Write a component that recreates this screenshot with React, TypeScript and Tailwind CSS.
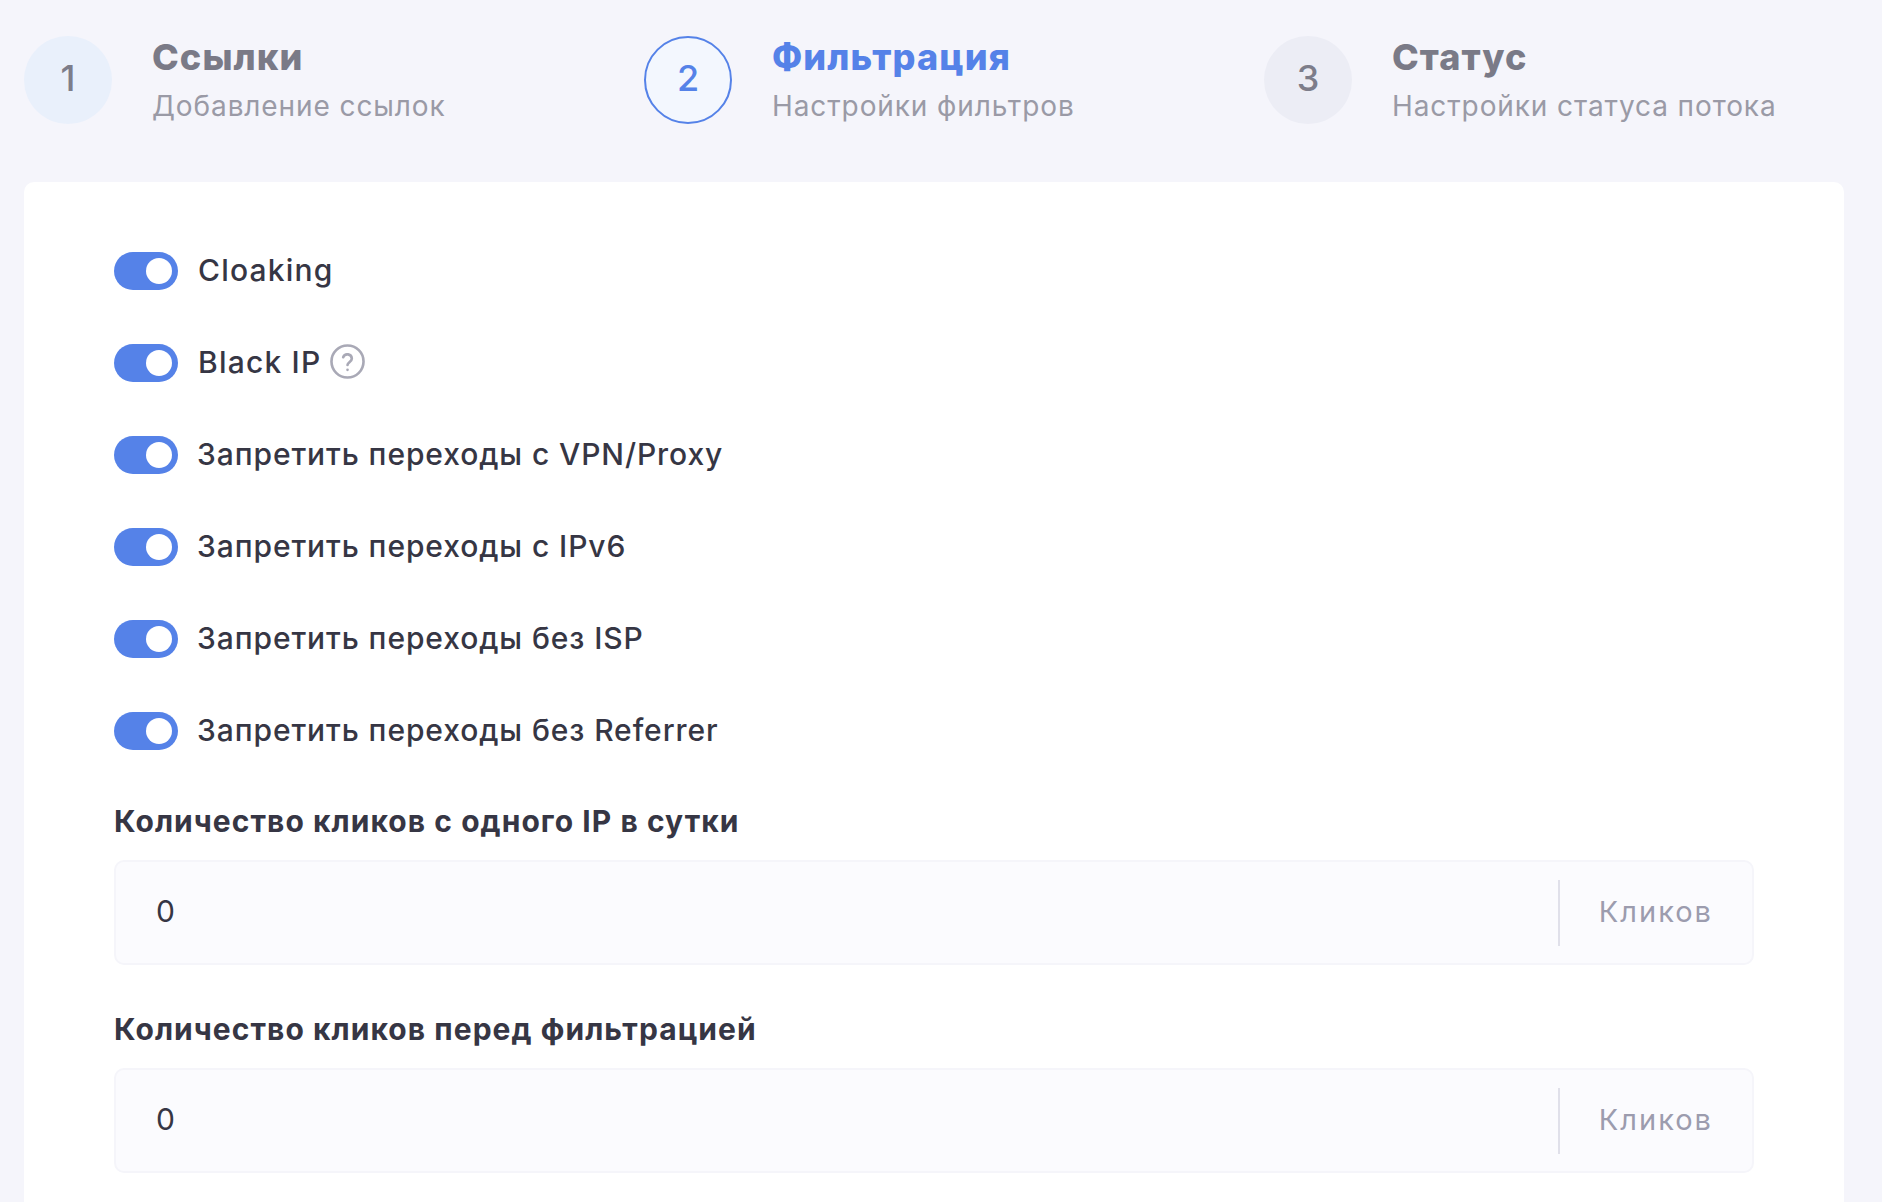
import React from "react";

function Step({ n, title, sub, state }: { n: string; title: string; sub: string; state: "done" | "active" | "todo" }) {
  const circle =
    state === "done"
      ? "bg-[#e9f0fb] text-[#7d7d8a]"
      : state === "active"
      ? "bg-[#f3f7fe] border-2 border-[#5582e8] text-[#5582e8]"
      : "bg-[#ecedf5] text-[#7d7d8a]";
  return (
    <div className="w-[620px] shrink-0 flex items-center gap-[40px]">
      <div className={`w-[88px] h-[88px] rounded-full flex items-center justify-center text-[36px] font-medium pb-[4px] ${circle}`}>{n}</div>
      <div className="flex flex-col pt-[3px]">
        <div className={`h-[48px] leading-[46px] text-[36px] font-extrabold tracking-[1.1px] whitespace-nowrap ${state === "active" ? "text-[#5582e8]" : "text-[#7a7a87]"}`}>{title}</div>
        <div className="h-[48px] leading-[48px] text-[28px] text-[#9a9aa6] tracking-[0.9px] whitespace-nowrap">{sub}</div>
      </div>
    </div>
  );
}

function Toggle({ label, help, latin }: { label: string; help?: boolean; latin?: boolean }) {
  return (
    <div className="flex items-center h-[38px] gap-[20px]">
      <div className="relative w-[64px] h-[38px] rounded-full bg-[#5582e8] shrink-0">
        <div className="absolute right-[6px] top-[6px] w-[26px] h-[26px] rounded-full bg-white" />
      </div>
      <span className={`text-[30px] font-medium text-[#363644] whitespace-nowrap pb-[2px] ${latin ? "tracking-[1.2px]" : "tracking-[0.9px] -ml-[1px]"}`}>{label}</span>
      {help && (
        <svg className="-ml-[12px] mb-[4px]" width="37" height="37" viewBox="0 0 24 24" fill="none" stroke="#a9a9b6" strokeWidth="1.7" strokeLinecap="round" strokeLinejoin="round">
          <circle cx="12" cy="12" r="10.4" />
          <path d="M9.2 9.2a2.9 2.9 0 0 1 5.6 1c0 1.9-2.8 2.6-2.8 4" />
          <path d="M12 17.4h.01" />
        </svg>
      )}
    </div>
  );
}

function Field({ label, className }: { label: string; className: string }) {
  return (
    <div className={className}>
      <div className="h-[36px] leading-[36px] text-[30px] font-bold text-[#363644] tracking-[1.05px] mb-[21px] whitespace-nowrap">{label}</div>
      <div className="h-[105px] rounded-[10px] border-2 border-[#f5f5fa] bg-[#fbfbfe] flex items-center pl-[40px] pr-[39px]">
        <span className="flex-1 text-[30px] text-[#363644] pb-[2px]">0</span>
        <div className="w-[2px] h-[66px] bg-[#e0e0ea] mr-[39px]" />
        <span className="text-[29px] text-[#9c9cae] tracking-[2px] pb-[1px]">Кликов</span>
      </div>
    </div>
  );
}

export default function App() {
  return (
    <div className="h-[1202px] overflow-hidden bg-[#f5f5fb] pl-[24px] pr-[38px] pt-[36px]" style={{ fontFamily: "Inter, 'Noto Sans', sans-serif" }}>
      <div className="flex h-[88px] mb-[58px]">
        <Step n="1" title="Ссылки" sub="Добавление ссылок" state="done" />
        <Step n="2" title="Фильтрация" sub="Настройки фильтров" state="active" />
        <Step n="3" title="Статус" sub="Настройки статуса потока" state="todo" />
      </div>
      <div className="bg-white rounded-[10px] h-[1100px] pl-[90px] pr-[90px] pt-[70px]">
        <div className="flex flex-col gap-[54px] mb-[53px]">
          <Toggle label="Cloaking" latin />
          <Toggle label="Black IP" help latin />
          <Toggle label="Запретить переходы с VPN/Proxy" />
          <Toggle label="Запретить переходы с IPv6" />
          <Toggle label="Запретить переходы без ISP" />
          <Toggle label="Запретить переходы без Referrer" />
        </div>
        <Field label="Количество кликов с одного IP в сутки" className="mb-[46px]" />
        <Field label="Количество кликов перед фильтрацией" className="" />
      </div>
    </div>
  );
}
